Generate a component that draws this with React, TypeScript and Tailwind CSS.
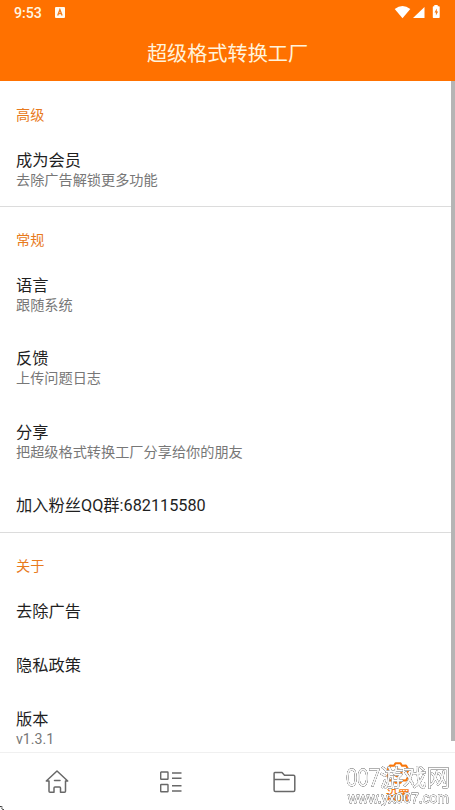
import React from "react";

function Category({ children, compact }: { children: React.ReactNode; compact?: boolean }) {
  return (
    <h2
      className={
        compact
          ? "flex h-[51.5px] items-end pb-[8.5px] pl-4 text-[14.15px] leading-[20px] text-[#e87a1c]"
          : "flex h-[52.5px] items-end pb-[9px] pl-4 text-[14.15px] leading-[20px] text-[#e87a1c]"
      }
    >
      {children}
    </h2>
  );
}

function Item({ title, summary }: { title: string; summary?: string }) {
  return (
    <div className={summary ? "h-[73.5px] pl-4 pt-[17px]" : "h-[54.2px] pl-4 pt-[17px]"}>
      <div className="text-[16.25px] leading-[20px] text-[#1f1f1f]">{title}</div>
      {summary && <div className="text-[14.18px] leading-[19.5px] text-[#777]">{summary}</div>}
    </div>
  );
}

function StatusBar() {
  return (
    <div className="flex h-[25px] items-center px-[14px] text-[#fff6e2]">
      <span className="w-[41px] pt-[2px] text-[14.2px] font-medium leading-[25px]">9:53</span>
      <svg width="10" height="11" viewBox="0 0 10 11">
        <rect width="10" height="11" rx="1" fill="#fffaf0" />
        <path d="M2.7 8.5 4.9 2.7 7.1 8.5M3.5 6.7h2.8" fill="none" stroke="#f57916" strokeWidth="1.3" />
      </svg>
      <svg className="mb-[1px] ml-auto" width="47" height="14" viewBox="0 0 47 14">
        <path d="M.7 4Q8.500-1.800 16.300 4L8.500 13.300Z" fill="#fff" />
        <path d="M19 13 30.500 2V13Z" fill="#fff" />
        <path d="M40.300 0h3.400v1.200H45q.7 0 .7.700v10.400q0 .7-.7.700h-5.500q-.7 0-.7-.7V1.900q0-.7.7-.7h.8Z" fill="#fff" />
        <path d="m42.800 3.500-2.300 4h1.400v3l2.300-4h-1.400Z" fill="#f57916" />
      </svg>
    </div>
  );
}

function HomeIcon() {
  return (
    <svg width="24" height="25" viewBox="0 0 24 25" fill="none" stroke="#686868" strokeWidth="1.5" strokeLinejoin="round" strokeLinecap="round">
      <path d="M1.300 12 12 2 22.700 12H20.500V22.200q0 1-1 1h-4V19q0-1-1-1h-4.500q-1 0-1 1v4.200H5q-1 0-1-1V12ZM9.500 11.500h5.500" />
    </svg>
  );
}

function ListIcon() {
  return (
    <svg width="22" height="22" viewBox="0 0 22 22" fill="none" stroke="#686868" strokeWidth="1.400">
      <rect x=".7" y="1" width="7.300" height="7.300" rx=".5" />
      <rect x=".7" y="13.500" width="7.300" height="7.300" rx=".5" />
      <path d="M12 2h9.500M12 7.200h9.500M12 14.700h9.500M12 20h9.500" />
    </svg>
  );
}

function FolderIcon() {
  return (
    <svg width="23" height="22" viewBox="0 0 23 22" fill="none" stroke="#686868" strokeWidth="1.500" strokeLinejoin="round">
      <path d="M1.800 1.500H9l2.500 2.700H20.500q1.300 0 1.300 1.300V19q0 1.500-1.300 1.500H2.300q-1.200 0-1.200-1.500V2.500q0-1 .7-1ZM1.100 8.500h15.600" />
    </svg>
  );
}

function GearIcon() {
  return (
    <svg width="24" height="22" viewBox="0 0 24 22" fill="none" stroke="#f8770c" strokeWidth="2" strokeLinejoin="round">
      <path d="M9.500 1.200h5l1.500 2.600 4-.2 2.600 4.400L20.800 11l1.800 3-2.600 4.400-4-.2-1.500 2.600h-5L8 18.200l-4 .2L1.400 14l1.800-3-1.800-3L4 3.600l4 .2Z" />
      <circle cx="12" cy="11" r="3.500" />
    </svg>
  );
}

function Watermark() {
  return (
    <svg
      className="absolute bottom-0 right-0 font-light [filter:drop-shadow(0_0_0.5px_#333)_drop-shadow(0_0_0.5px_#555)]"
      width="115"
      height="50"
      viewBox="0 0 115 50"
      stroke="#fff"
      fill="#fff"
      strokeWidth=".8"
    >
      <text x="6" y="25.5" fontSize="23" textLength="34" lengthAdjust="spacingAndGlyphs" className="font-['Open_Sans',sans-serif]">007</text>
      <text x="40" y="26" fontSize="23" textLength="70" lengthAdjust="spacingAndGlyphs" className="font-['Noto_Sans_CJK_SC',sans-serif]">游戏网</text>
      <text x="8" y="42.500" fontSize="14" strokeWidth=".4" textLength="101" lengthAdjust="spacingAndGlyphs" className="font-['Liberation_Sans',sans-serif]">www.yx007.com</text>
    </svg>
  );
}

export default function App() {
  return (
    <div className="relative flex h-[810px] w-[455px] flex-col overflow-hidden bg-white font-[Roboto,'Noto_Sans_CJK_SC',sans-serif]">
      <header className="h-[81px] shrink-0 bg-[#ff7100]">
        <StatusBar />
        <h1 className="text-center text-[20.15px] leading-[58px] text-[#fff3dc]">超级格式转换工厂</h1>
      </header>
      <main className="flex min-h-0 flex-1">
        <div className="flex-1 overflow-hidden">
          <section className="h-[126px] border-b border-[#dcdcdc]">
            <Category>高级</Category>
            <Item title="成为会员" summary="去除广告解锁更多功能" />
          </section>
          <section className="h-[326px] border-b border-[#dcdcdc]">
            <Category compact>常规</Category>
            <Item title="语言" summary="跟随系统" />
            <Item title="反馈" summary="上传问题日志" />
            <Item title="分享" summary="把超级格式转换工厂分享给你的朋友" />
            <Item title="加入粉丝QQ群:682115580" />
          </section>
          <section>
            <Category compact>关于</Category>
            <Item title="去除广告" />
            <Item title="隐私政策" />
            <Item title="版本" summary="v1.3.1" />
          </section>
        </div>
        <div className="h-[660px] w-1 bg-[#b5b5b5]" />
      </main>
      <nav className="grid h-[58px] shrink-0 grid-cols-4 border-t border-[#f0f0f0] bg-white">
        <div className="flex items-center justify-center"><HomeIcon /></div>
        <div className="flex items-center justify-center"><ListIcon /></div>
        <div className="flex items-center justify-center"><FolderIcon /></div>
        <div className="flex flex-col items-center pt-[9px] text-[12px] font-medium leading-[18px] text-[#f8770c]">
          <GearIcon />
          <span className="mt-[3px]">设置</span>
        </div>
      </nav>
      <Watermark />
      <svg className="absolute bottom-0 left-0" width="5" height="5" viewBox="0 0 5 5" fill="none" stroke="#222" strokeWidth="1">
        <path d="M0 1.500 2.500 2M1.500 3.500 4 5" />
      </svg>
    </div>
  );
}
